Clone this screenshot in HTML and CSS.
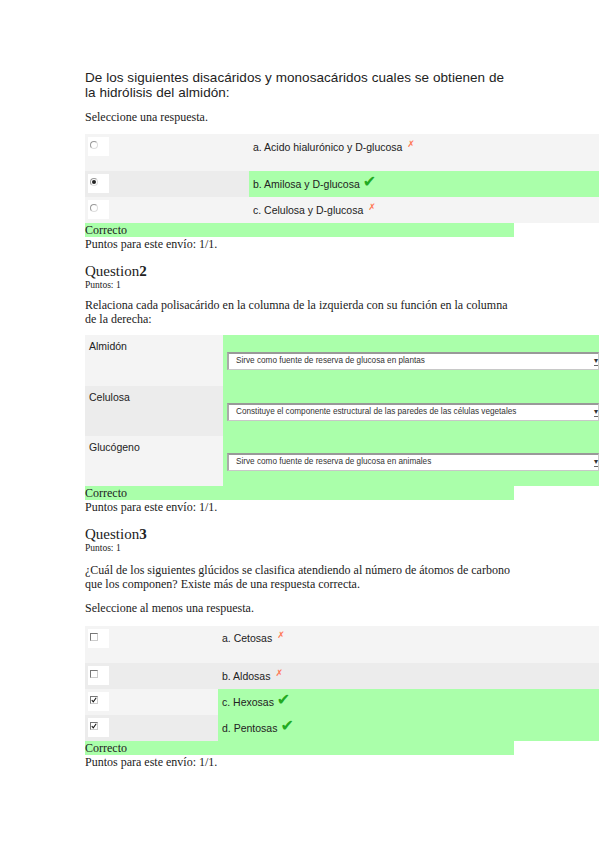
FILE: index.html
```html
<!DOCTYPE html>
<html lang="es">
<head>
  <meta charset="UTF-8" />
  <title>Cuestionario – Glúcidos</title>
  <link rel="stylesheet" href="styles.css">
</head>
<body>
  <div class="quiz">

    <div class="question q1">
      <div class="qtext-sans">De los siguientes disacáridos y monosacáridos cuales se obtienen de la hidrólisis del almidón:</div>
      <p class="prompt">Seleccione una respuesta.</p>
      <table class="answers">
        <tr class="r0 first">
          <td class="pick w1"><div class="box"><span class="radio"></span></div></td>
          <td class="label">a. Acido hialurónico y D-glucosa <span class="cross">✗</span></td>
        </tr>
        <tr class="r1">
          <td class="pick w1"><div class="box"><span class="radio on"></span></div></td>
          <td class="label ok">b. Amilosa y D-glucosa <span class="tick">✔</span></td>
        </tr>
        <tr class="r0">
          <td class="pick w1"><div class="box"><span class="radio"></span></div></td>
          <td class="label">c. Celulosa y D-glucosa <span class="cross">✗</span></td>
        </tr>
      </table>
      <div class="feedback">Correcto</div>
      <div class="grade">Puntos para este envío: 1/1.</div>
    </div>

    <div class="question q2">
      <h3 class="qno">Question<b>2</b></h3>
      <div class="points">Puntos: 1</div>
      <div class="qtext">Relaciona cada polisacárido en la columna de la izquierda con su función en la columna de la derecha:</div>
      <table class="match">
        <tr class="r0 tall">
          <td class="term">Almidón</td>
          <td class="ok"><div class="select">Sirve como fuente de reserva de glucosa en plantas<span class="arrow">▾</span></div></td>
        </tr>
        <tr class="r1">
          <td class="term">Celulosa</td>
          <td class="ok"><div class="select">Constituye el componente estructural de las paredes de las células vegetales<span class="arrow">▾</span></div></td>
        </tr>
        <tr class="r0">
          <td class="term">Glucógeno</td>
          <td class="ok"><div class="select">Sirve como fuente de reserva de glucosa en animales<span class="arrow">▾</span></div></td>
        </tr>
      </table>
      <div class="feedback">Correcto</div>
      <div class="grade">Puntos para este envío: 1/1.</div>
    </div>

    <div class="question q3">
      <h3 class="qno">Question<b>3</b></h3>
      <div class="points">Puntos: 1</div>
      <div class="qtext tight">¿Cuál de los siguientes glúcidos se clasifica atendiendo al número de átomos de carbono que los componen? Existe más de una respuesta correcta.</div>
      <p class="prompt">Seleccione al menos una respuesta.</p>
      <table class="answers">
        <tr class="r0 first">
          <td class="pick w3"><div class="box"><span class="check"></span></div></td>
          <td class="label">a. Cetosas <span class="cross">✗</span></td>
        </tr>
        <tr class="r1">
          <td class="pick w3"><div class="box"><span class="check"></span></div></td>
          <td class="label">b. Aldosas <span class="cross">✗</span></td>
        </tr>
        <tr class="r0">
          <td class="pick w3"><div class="box"><span class="check"><svg viewBox="0 0 8 8" width="6" height="6"><path d="M1 4 L3 6.5 L7 1" fill="none" stroke="#111" stroke-width="1.4"/></svg></span></div></td>
          <td class="label ok">c. Hexosas <span class="tick">✔</span></td>
        </tr>
        <tr class="r1">
          <td class="pick w3"><div class="box"><span class="check"><svg viewBox="0 0 8 8" width="6" height="6"><path d="M1 4 L3 6.5 L7 1" fill="none" stroke="#111" stroke-width="1.4"/></svg></span></div></td>
          <td class="label ok">d. Pentosas <span class="tick">✔</span></td>
        </tr>
      </table>
      <div class="feedback">Correcto</div>
      <div class="grade">Puntos para este envío: 1/1.</div>
    </div>

  </div>
</body>
</html>
```

FILE: styles.css
```css
body {
  margin: 0;
  background: #fff;
  color: #222;
  font-family: "Liberation Serif", "Times New Roman", serif;
  font-size: 12px;
  overflow: hidden;
}

.quiz {
  padding: 70px 0 0 85px;
  width: 429px;
}

.qtext-sans {
  font-family: "Liberation Sans", Arial, sans-serif;
  font-size: 13.5px;
  line-height: 15px;
  letter-spacing: 0.05px;
}

.prompt {
  margin: 10px 0 10px;
  line-height: 14px;
}

.q3 .prompt {
  margin: 10px 0 11px;
}

.answers,
.match {
  width: 514px;
  border-collapse: collapse;
  border-spacing: 0;
  font-family: "Liberation Sans", Arial, sans-serif;
  font-size: 10.5px;
}

td {
  padding: 0;
  vertical-align: top;
  box-sizing: border-box;
}

.r0 td { background: #f4f4f4; }
.r1 td { background: #ececec; }
.answers td.ok,
.match td.ok { background: #aaffaa; }

.w1 { width: 164px; }
.w3 { width: 133px; }

.pick {
  padding: 3px 0 0 3px;
}

.box {
  width: 21px;
  height: 19px;
  background: #fff;
  padding: 4px 0 0 2px;
  box-sizing: border-box;
}

.radio {
  display: block;
  width: 8px;
  height: 8px;
  border-radius: 50%;
  border: 1px solid #999;
  border-right-color: #ddd;
  border-bottom-color: #ddd;
  box-sizing: border-box;
  position: relative;
}

.radio.on::after {
  content: "";
  position: absolute;
  left: 1px;
  top: 1px;
  width: 4px;
  height: 4px;
  border-radius: 50%;
  background: #222;
}

.check {
  display: block;
  width: 8px;
  height: 8px;
  border: 1px solid #777;
  border-right-color: #ccc;
  border-bottom-color: #ccc;
  box-sizing: border-box;
  overflow: hidden;
}

.check svg {
  display: block;
}

.label {
  padding: 6px 4px 6px;
  line-height: 14px;
  height: 26px;
  color: #222;
}

.first .label {
  padding-bottom: 17px;
  height: 37px;
}

.q3 .first .label {
  padding-top: 5px;
  padding-bottom: 18px;
}

.cross {
  color: #ff7755;
  font-family: "DejaVu Sans", sans-serif;
  font-size: 9px;
  line-height: 0;
  vertical-align: 4px;
  margin-left: 2px;
}

.tick {
  color: #22aa22;
  font-family: "DejaVu Sans", sans-serif;
  font-size: 16px;
  line-height: 0;
  vertical-align: 1px;
}

.feedback {
  background: #aaffaa;
  height: 14px;
  line-height: 14px;
}

.grade {
  line-height: 14px;
}

.qno {
  margin: 12px 0 0;
  font-size: 15px;
  font-weight: normal;
  line-height: 17px;
}

.points {
  font-size: 9.5px;
  line-height: 10px;
}

.qtext {
  margin: 8px 0 9px;
  line-height: 14px;
}

.qtext.tight {
  margin: 11px 0 0;
  line-height: 13.5px;
}

.match tr { height: 50px; }
.match tr.tall { height: 51px; }

.term {
  width: 138px;
  padding: 4px 4px 0;
  line-height: 14px;
}

.match td.ok {
  padding: 17px 0 0 4px;
}

.select {
  position: relative;
  height: 18px;
  width: 372px;
  box-sizing: border-box;
  background: #fff;
  border: 1px solid #c8c8c8;
  border-top: 2px solid #999;
  border-left: 2px solid #aaa;
  padding: 2px 0 0 7px;
  font-size: 8.2px;
  line-height: 9px;
  color: #333;
  white-space: nowrap;
}

.arrow {
  position: absolute;
  right: 0;
  top: 3px;
  font-size: 8px;
  line-height: 8px;
  color: #333;
  border-bottom: 1px solid #666;
}
```
